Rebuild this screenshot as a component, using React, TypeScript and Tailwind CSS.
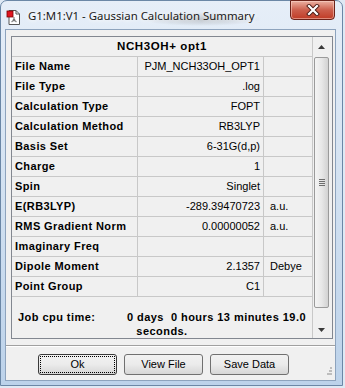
import React from "react";

const rows: [string, string, string][] = [
  ["File Name", "PJM_NCH33OH_OPT1", ""],
  ["File Type", ".log", ""],
  ["Calculation Type", "FOPT", ""],
  ["Calculation Method", "RB3LYP", ""],
  ["Basis Set", "6-31G(d,p)", ""],
  ["Charge", "1", ""],
  ["Spin", "Singlet", ""],
  ["E(RB3LYP)", "-289.39470723", "a.u."],
  ["RMS Gradient Norm", "0.00000052", "a.u."],
  ["Imaginary Freq", "", ""],
  ["Dipole Moment", "2.1357", "Debye"],
  ["Point Group", "C1", ""],
];

function AppIcon() {
  return (
    <svg width="16" height="16" viewBox="0 0 16 16">
      <path d="M3 1.5h7l3.5 3.5v10.5H3z" fill="#fff" stroke="#555" strokeWidth="1" />
      <path d="M10 1.5v3.5h3.5" fill="none" stroke="#555" strokeWidth="1" />
      <line x1="8" y1="8" x2="8" y2="11" stroke="#888" strokeWidth="1.2" />
      <line x1="8" y1="11" x2="5.5" y2="13" stroke="#888" strokeWidth="1.2" />
      <line x1="8" y1="11" x2="10.5" y2="13" stroke="#888" strokeWidth="1.2" />
      <circle cx="8" cy="11" r="1.3" fill="#777" />
      <rect x="1" y="2" width="6" height="6" fill="#e0141e" stroke="#7a0000" strokeWidth="0.8" />
    </svg>
  );
}

function CloseButton() {
  return (
    <div className="w-[45px] h-[20px] -mt-px rounded-b-[4px] border border-[#6b2219] bg-gradient-to-b from-[#eab0a2] via-[#cc5e4c] to-[#c03a24] flex items-center justify-center shadow-[inset_0_0_0_1px_rgba(255,220,210,0.5)]">
      <svg width="14" height="12" viewBox="0 0 14 12">
        <path d="M3 2l8 8M11 2l-8 8" stroke="#4a1a14" strokeWidth="4" strokeLinecap="square" />
        <path d="M3 2l8 8M11 2l-8 8" stroke="#fff" strokeWidth="2.2" strokeLinecap="square" />
      </svg>
    </div>
  );
}

function Triangle({ down }: { down?: boolean }) {
  return (
    <svg width="7" height="4" viewBox="0 0 7 4">
      <path d={down ? "M0 0h7L3.5 4z" : "M3.5 0L7 4H0z"} fill="#3a3a3a" />
    </svg>
  );
}

function ScrollBar() {
  return (
    <div className="w-[20px] border-l border-[#c8c8c8] bg-[#f0f0f0] flex flex-col">
      <div className="h-[20px] flex items-center justify-center pr-[3px]">
        <Triangle />
      </div>
      <div className="h-[251px] w-[15px] ml-[1px] rounded-[2px] border border-[#9a9a9a] bg-gradient-to-r from-[#f4f4f4] via-[#e8e8e8] to-[#d2d2d2] flex flex-col items-center justify-center gap-[1px]">
        <div className="w-[6px] h-px bg-[#6e6e6e]" />
        <div className="w-[6px] h-px bg-[#6e6e6e]" />
        <div className="w-[6px] h-px bg-[#6e6e6e]" />
        <div className="w-[6px] h-px bg-[#6e6e6e]" />
      </div>
      <div className="flex-1 flex items-end justify-center pb-[6px] pr-[3px]">
        <Triangle down />
      </div>
    </div>
  );
}

function Button({ label, focused }: { label: string; focused?: boolean }) {
  return (
    <div
      className={`w-[79px] h-[21px] rounded-[3px] border ${
        focused ? "border-[#3a3a3a]" : "border-[#707070]"
      } bg-gradient-to-b from-[#f2f2f2] via-[#ebebeb] to-[#d6d6d6] p-[1px]`}
    >
      <div
        className={`h-full w-full flex items-center justify-center text-[11px] text-black ${
          focused ? "border border-dotted border-black" : ""
        }`}
      >
        {label}
      </div>
    </div>
  );
}

export default function App() {
  return (
    <div className="w-[345px] h-[388px] bg-[#dfe9f4] overflow-hidden font-['Liberation_Sans',Arial,sans-serif]">
      <div className="w-[343px] h-[386px] rounded-t-[7px] border border-[#6b87a6] bg-gradient-to-b from-[#e6eef8] via-[#d2e1f1] to-[#bcd2ea] flex flex-col">
        <div className="h-[28px] flex items-start bg-[radial-gradient(ellipse_60px_7px_at_200px_18px,rgba(80,80,80,0.3),transparent)]">
          <div className="pl-[5px] pt-[8px]">
            <AppIcon />
          </div>
          <div className="pl-[6px] pt-[7px] text-[11.4px] leading-[16px] text-[#1a1a1a] font-['Noto_Sans',sans-serif] [text-shadow:0_0_6px_#fff,0_0_4px_#fff]">
            G1:M1:V1 - Gaussian Calculation Summary
          </div>
          <div className="flex-1" />
          <div className="mr-[7px]">
            <CloseButton />
          </div>
        </div>

        <div className="ml-[4px] w-[331px] h-[352px] border border-[#8da3bd] bg-[#f0f0f0] flex flex-col">
          <div className="pl-[5px] pt-[6px]">
            <div className="w-[322px] h-[303px] border border-[#828790] bg-[#f0f0f0] flex">
              <div className="w-[300px] flex flex-col">
                <div className="h-[20px] border-b border-[#c8c8c8] flex items-center justify-center text-[11.5px] font-bold tracking-[0.6px] text-black">
                  NCH3OH+ opt1
                </div>
                {rows.map(([label, value, unit]) => (
                  <div key={label} className="h-[20px] border-b border-[#c8c8c8] flex text-[11px] text-black">
                    <div className="w-[126px] border-r border-[#c8c8c8] pl-[3px] flex items-center font-bold tracking-[0.4px]">
                      {label}
                    </div>
                    <div className="w-[126px] border-r border-[#c8c8c8] pr-[3px] flex items-center justify-end">
                      {value}
                    </div>
                    <div className="w-[48px] pl-[6px] flex items-center">{unit}</div>
                  </div>
                ))}
                <div className="flex-1 pt-[13px] text-[11px] leading-[14px] font-bold tracking-[0.45px] text-black text-center">
                  <div className="whitespace-pre">Job cpu time:         0 days  0 hours 13 minutes 19.0</div>
                  <div>seconds.</div>
                </div>
              </div>
              <ScrollBar />
            </div>
          </div>
          <div className="mt-[6px] border-t border-[#a0a0a0] border-b border-b-white" />
          <div className="flex items-start">
            <div className="flex gap-[7px] pl-[32px] pt-[7px]">
              <Button label="Ok" focused />
              <Button label="View File" />
              <Button label="Save Data" />
            </div>
            <div className="flex-1" />
            <div className="pt-[20px] pr-[4px] grid grid-cols-3 gap-[1px] w-[8px]">
              <div />
              <div />
              <div className="w-[2px] h-[2px] bg-[#bdbdbd]" />
              <div />
              <div className="w-[2px] h-[2px] bg-[#bdbdbd]" />
              <div className="w-[2px] h-[2px] bg-[#bdbdbd]" />
              <div className="w-[2px] h-[2px] bg-[#bdbdbd]" />
              <div className="w-[2px] h-[2px] bg-[#bdbdbd]" />
              <div className="w-[2px] h-[2px] bg-[#bdbdbd]" />
            </div>
          </div>
        </div>
      </div>
    </div>
  );
}
